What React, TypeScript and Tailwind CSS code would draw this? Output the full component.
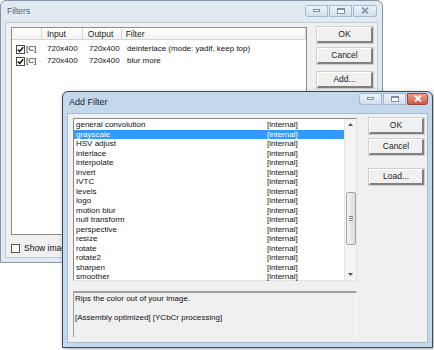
import React from "react";

const filters = [
  "general convolution",
  "grayscale",
  "HSV adjust",
  "interlace",
  "interpolate",
  "invert",
  "IVTC",
  "levels",
  "logo",
  "motion blur",
  "null transform",
  "perspective",
  "resize",
  "rotate",
  "rotate2",
  "sharpen",
  "smoother",
];

const chain = [
  { input: "720x400", output: "720x400", name: "deinterlace (mode: yadif, keep top)" },
  { input: "720x400", output: "720x400", name: "blur more" },
];

const CheckBox = ({ checked }: { checked?: boolean }) => (
  <div className="w-[9px] h-[9px] border border-[#4a4a4a] bg-white flex items-center justify-center shrink-0">
    {checked && (
      <svg width="7" height="7" viewBox="0 0 7 7">
        <path d="M0.8 3.4 L2.7 5.4 L6.2 1.2" stroke="#111" strokeWidth="1.5" fill="none" />
      </svg>
    )}
  </div>
);

const Button = ({ label }: { label: string }) => (
  <div className="h-[16px] w-full flex items-center justify-center bg-[#f0f0f0] border-t border-l border-t-white border-l-white border-b-2 border-r-2 border-b-[#808080] border-r-[#808080] shadow-[0_0_0_1px_#cfcfcf] text-[8.5px] text-[#222]">
    {label}
  </div>
);

const TitleButtons = ({ active }: { active?: boolean }) => (
  <div className="flex items-center gap-[1px] h-[12px]">
    <div className="w-[23px] h-[12px] rounded-l-[3px] border border-[#a5b7ca] bg-gradient-to-b from-[#eef3f8] to-[#d3dfeb] flex items-center justify-center">
      <div className="w-[7px] h-[3px] border border-[#7c8ea1] bg-white" />
    </div>
    <div className="w-[23px] h-[12px] border border-[#a5b7ca] bg-gradient-to-b from-[#eef3f8] to-[#d3dfeb] flex items-center justify-center">
      <div className="w-[8px] h-[6px] border border-[#7c8ea1] border-t-2 bg-white" />
    </div>
    <div
      className={
        active
          ? "w-[21px] h-[12px] rounded-r-[3px] border border-[#9a4536] bg-gradient-to-b from-[#eba090] to-[#cc5a43] flex items-center justify-center"
          : "w-[24px] h-[12px] rounded-r-[3px] border border-[#a5b7ca] bg-gradient-to-b from-[#eef3f8] to-[#d3dfeb] flex items-center justify-center"
      }
    >
      <svg width="8" height="7" viewBox="0 0 8 7">
        <path
          d="M1 0.5 L7 6.5 M7 0.5 L1 6.5"
          stroke={active ? "#fff" : "#8797a8"}
          strokeWidth="1.8"
          fill="none"
        />
      </svg>
    </div>
  </div>
);

export default function App() {
  return (
    <div className="relative w-[434px] h-[350px] bg-white overflow-hidden font-['Liberation_Sans',Arial,sans-serif] text-[#111]">
      {/* Filters window */}
      <div className="absolute left-0 top-0 w-[383px] h-[263px] rounded-t-[6px] border border-[#8795a4] bg-[#e1e9f2] flex flex-col px-[4px] pb-[4px]">
        <div className="h-[21px] flex items-center justify-between pl-[2px] pt-[1px]">
          <span className="text-[8.5px] text-[#56636f] -mt-[2px]">Filters</span>
          <div className="mr-[1px] -mt-[3px]">
            <TitleButtons />
          </div>
        </div>
        <div className="flex-1 bg-[#f0f0f0] border border-[#c0ccd8] flex pl-[5px] pt-[4px] pr-[4px]">
          <div className="flex flex-col w-[296px]">
            <div className="h-[208px] border border-[#8c8c8c] bg-white flex flex-col">
              <div className="h-[12px] flex text-[8.5px] border-b border-[#d5d5d5] bg-gradient-to-b from-white to-[#f3f3f3] text-[#222]">
                <div className="w-[30px] border-r border-[#d5d5d5]" />
                <div className="w-[41px] border-r border-[#d5d5d5] pl-[5px] leading-[12px]">Input</div>
                <div className="w-[39px] border-r border-[#d5d5d5] pl-[5px] leading-[12px]">Output</div>
                <div className="w-[185px] border-r border-[#d5d5d5] pl-[4px] leading-[12px]">Filter</div>
              </div>
              <div className="pt-[3px] flex flex-col">
                {chain.map((r, i) => (
                  <div key={i} className="h-[12px] flex items-center text-[8px]">
                    <div className="w-[30px] flex items-center pl-[4px] gap-[1px]">
                      <CheckBox checked />
                      <span>[C]</span>
                    </div>
                    <div className="w-[41px] pl-[5px]">{r.input}</div>
                    <div className="w-[39px] pl-[6px]">{r.output}</div>
                    <div className="pl-[5px] whitespace-nowrap">{r.name}</div>
                  </div>
                ))}
              </div>
            </div>
            <div className="mt-[7px] flex items-center gap-[4px] text-[8.5px]">
              <div className="w-[9px] h-[9px] border border-[#555] bg-white" />
              <span>Show image</span>
            </div>
          </div>
          <div className="ml-[10px] w-[56px] flex flex-col">
            <Button label="OK" />
            <div className="mt-[5px]">
              <Button label="Cancel" />
            </div>
            <div className="mt-[8px]">
              <Button label="Add..." />
            </div>
          </div>
        </div>
      </div>

      {/* Add Filter window */}
      <div className="absolute left-[62px] top-[91px] w-[371px] h-[257px] rounded-t-[6px] border border-[#34495c] bg-[#c4d8ec] flex flex-col px-[4px] pb-[4px] shadow-[2px_2px_6px_rgba(0,0,0,0.3)]">
        <div className="h-[21px] flex items-center justify-between pl-[2px]">
          <span className="text-[9px] text-[#17222e]">Add Filter</span>
          <div className="-mt-[8px]">
            <TitleButtons active />
          </div>
        </div>
        <div className="flex-1 bg-[#f0f0f0] border border-[#a8bbce] flex pl-[5px] pt-[4px]">
          <div className="w-[284px] flex flex-col">
            <div className="h-[163px] border border-t-[#8a8a8a] border-l-[#8a8a8a] border-r-[#e3e3e3] border-b-[#e3e3e3] bg-white flex">
              <div className="flex-1 flex flex-col text-[8px] leading-[9.5px] pt-[1px]">
                {filters.map((f) => {
                  const sel = f === "grayscale";
                  return (
                    <div
                      key={f}
                      className={
                        sel
                          ? "h-[9.5px] flex bg-[#3399ff] text-white"
                          : "h-[9.5px] flex"
                      }
                    >
                      <span className="w-[193px] pl-[2px]">{f}</span>
                      <span>[internal]</span>
                    </div>
                  );
                })}
              </div>
              <div className="w-[12px] bg-[#f4f4f4] border-l border-[#e6e6e6] flex flex-col items-center">
                <div className="h-[11px] flex items-center justify-center">
                  <svg width="5" height="3" viewBox="0 0 5 3">
                    <path d="M0 3 L2.5 0 L5 3 Z" fill="#555" />
                  </svg>
                </div>
                <div className="mt-[62px] w-[10px] h-[53px] rounded-[2px] border border-[#a5a5a5] bg-gradient-to-r from-[#f4f4f4] to-[#dcdcdc] flex items-center justify-center">
                  <div className="flex flex-col gap-[1px]">
                    <div className="w-[4px] h-[1px] bg-[#888]" />
                    <div className="w-[4px] h-[1px] bg-[#888]" />
                    <div className="w-[4px] h-[1px] bg-[#888]" />
                  </div>
                </div>
                <div className="flex-1" />
                <div className="h-[11px] flex items-center justify-center">
                  <svg width="5" height="3" viewBox="0 0 5 3">
                    <path d="M0 0 L2.5 3 L5 0 Z" fill="#555" />
                  </svg>
                </div>
              </div>
            </div>
            <div className="mt-[10px] h-[46px] border-t-2 border-l border-t-[#a0a0a0] border-l-[#a0a0a0] border-r border-r-white text-[8px] leading-[9.5px] pl-[1px] pt-[1px]">
              <div>Rips the color out of your image.</div>
              <div className="h-[9.5px]" />
              <div>[Assembly optimized] [YCbCr processing]</div>
            </div>
          </div>
          <div className="ml-[12px] w-[55px] flex flex-col">
            <Button label="OK" />
            <div className="mt-[5px]">
              <Button label="Cancel" />
            </div>
            <div className="mt-[14px]">
              <Button label="Load..." />
            </div>
          </div>
        </div>
      </div>
    </div>
  );
}
